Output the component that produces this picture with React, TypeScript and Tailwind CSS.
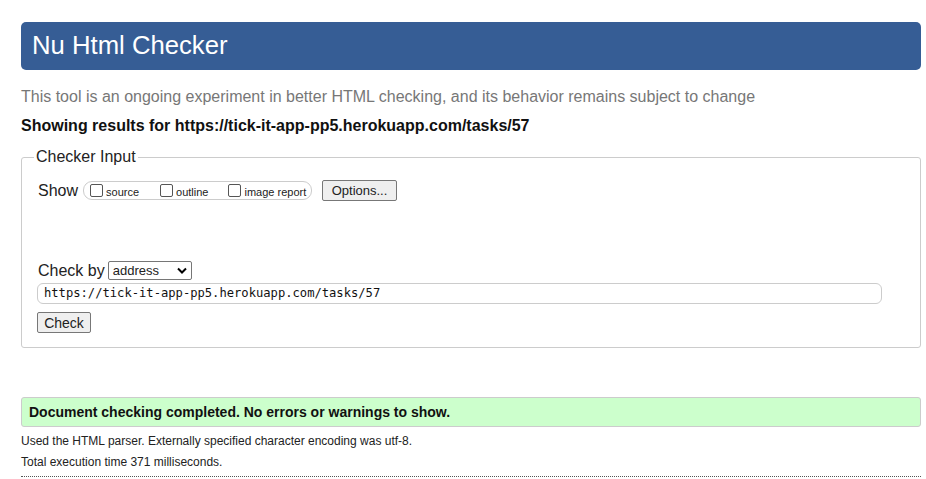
import React from "react";

export default function App() {
  return (
    <div
      className="w-[926px] h-[479px] overflow-hidden bg-white text-[#222]"
      style={{ fontFamily: '"Liberation Sans", Arial, sans-serif' }}
    >
      <div className="ml-[21px] w-[900px] pt-[22px]">
        <div className="h-[48px] rounded-[5px] bg-[#365d95] flex items-center pl-[11px]">
          <h1 className="text-white text-[25.7px] leading-none font-normal">Nu Html Checker</h1>
        </div>
        <p className="mt-[18px] text-[16px] leading-[18px] text-[#777]">
          This tool is an ongoing experiment in better HTML checking, and its behavior remains subject to change
        </p>
        <p className="mt-[11px] text-[16px] leading-[18px] font-bold text-[#111]">
          Showing results for https://tick-it-app-pp5.herokuapp.com/tasks/57
        </p>
        <div className="relative mt-[22px] h-[191px] border border-[#ccc] rounded-[3px]">
          <div className="absolute left-[12px] top-[-10px] bg-white px-[2px] text-[16px] leading-[18px] text-[#222]">
            Checker Input
          </div>
          <div className="flex items-center pl-[16px] pt-[22px]">
            <span className="text-[16px] leading-[18px]">Show</span>
            <div className="ml-[5px] h-[19px] w-[229px] border border-[#ccc] rounded-[9px] flex items-center pl-[6px] text-[11px] leading-none">
              <span className="w-[13px] h-[13px] border border-[#555] rounded-[2px] bg-white"></span>
              <span className="ml-[3px] mt-[3px]">source</span>
              <span className="ml-[21px] w-[13px] h-[13px] border border-[#555] rounded-[2px] bg-white"></span>
              <span className="ml-[3px] mt-[3px]">outline</span>
              <span className="ml-[20px] w-[13px] h-[13px] border border-[#555] rounded-[2px] bg-white"></span>
              <span className="ml-[3px] mt-[3px]">image report</span>
            </div>
            <div className="ml-[10px] h-[21px] w-[75px] border border-[#777] rounded-[2px] bg-[#efefef] flex items-center justify-center text-[13px] leading-none">
              Options...
            </div>
          </div>
          <div className="flex items-center pl-[16px] mt-[60px]">
            <span className="text-[16px] leading-[18px]">Check by</span>
            <div className="ml-[3px] h-[19px] w-[84px] border border-[#767676] rounded-[2px] bg-white flex items-center pl-[4px] pr-[4px] text-[13px] leading-none">
              <span className="flex-1">address</span>
              <svg width="10" height="7" viewBox="0 0 10 7">
                <path d="M1 1.5 L5 5.5 L9 1.5" stroke="#000" strokeWidth="2" fill="none" />
              </svg>
            </div>
          </div>
          <div
            className="ml-[15px] mt-[3px] h-[21px] w-[845px] border border-[#ccc] rounded-[6px] flex items-center pl-[6px] text-[12.15px] leading-none text-[#111]"
            style={{ fontFamily: '"DejaVu Sans Mono", "Liberation Mono", monospace' }}
          >
            https://tick-it-app-pp5.herokuapp.com/tasks/57
          </div>
          <div className="ml-[15px] mt-[8px] h-[21px] w-[54px] border border-[#777] rounded-[2px] bg-[#efefef] flex items-center justify-center text-[14px] leading-none">
            Check
          </div>
        </div>
        <div className="mt-[49px] h-[30px] border border-[#ccc] rounded-[3px] bg-[#ccffcc] flex items-center pl-[7px] text-[14px] font-bold text-[#111]">
          Document checking completed. No errors or warnings to show.
        </div>
        <p className="mt-[7px] text-[12px] leading-[14px] text-[#222]">
          Used the HTML parser. Externally specified character encoding was utf-8.
        </p>
        <p className="mt-[7px] text-[12px] leading-[14px] text-[#222]">
          Total execution time 371 milliseconds.
        </p>
        <div className="mt-[7px] border-t border-dotted border-[#555]"></div>
      </div>
    </div>
  );
}
